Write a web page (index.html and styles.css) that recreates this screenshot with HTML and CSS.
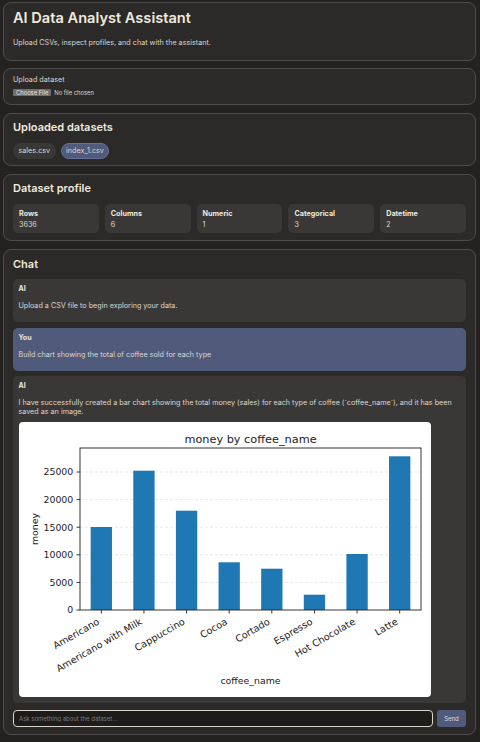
FILE: index.html
```html
<!DOCTYPE html>
<html lang="en">
<head>
  <meta charset="UTF-8">
  <meta name="viewport" content="width=device-width, initial-scale=1.0">
  <title>AI Data Analyst Assistant</title>
  <link rel="stylesheet" href="styles.css">
</head>
<body>
  <section class="panel header-panel">
    <h1>AI Data Analyst Assistant</h1>
    <p class="subtitle">Upload CSVs, inspect profiles, and chat with the assistant.</p>
  </section>

  <section class="panel upload-panel">
    <div class="field-label">Upload dataset</div>
    <label class="file-picker">
      <input type="file" id="fileInput" accept=".csv" hidden>
      <span class="file-button">Choose File</span>
      <span class="file-name">No file chosen</span>
    </label>
  </section>

  <section class="panel datasets-panel">
    <h2>Uploaded datasets</h2>
    <div class="chips">
      <button class="chip">sales.csv</button>
      <button class="chip active">index_1.csv</button>
    </div>
  </section>

  <section class="panel profile-panel">
    <h2>Dataset profile</h2>
    <div class="stats">
      <div class="stat"><div class="stat-label">Rows</div><div class="stat-value">3636</div></div>
      <div class="stat"><div class="stat-label">Columns</div><div class="stat-value">6</div></div>
      <div class="stat"><div class="stat-label">Numeric</div><div class="stat-value">1</div></div>
      <div class="stat"><div class="stat-label">Categorical</div><div class="stat-value">3</div></div>
      <div class="stat"><div class="stat-label">Datetime</div><div class="stat-value">2</div></div>
    </div>
  </section>

  <section class="panel chat-panel">
    <h2>Chat</h2>
    <div class="messages">
      <div class="message ai">
        <div class="message-role">AI</div>
        <p>Upload a CSV file to begin exploring your data.</p>
      </div>
      <div class="message user">
        <div class="message-role">You</div>
        <p>Build chart showing the total of coffee sold for each type</p>
      </div>
      <div class="message ai">
        <div class="message-role">AI</div>
        <p>I have successfully created a bar chart showing the total money (sales) for each type of coffee (`coffee_name`), and it has been saved as an image.</p>
        <div class="chart-image">
          <svg width="412" height="275" viewBox="0 0 412 275" font-family="DejaVu Sans, sans-serif">
            <!-- gridlines -->
            <g stroke="#b0b0b0" stroke-opacity="0.35" stroke-width="0.8" stroke-dasharray="3 2">
              <line x1="61" y1="160.4" x2="402" y2="160.4"/>
              <line x1="61" y1="132.8" x2="402" y2="132.8"/>
              <line x1="61" y1="105.2" x2="402" y2="105.2"/>
              <line x1="61" y1="77.6" x2="402" y2="77.6"/>
              <line x1="61" y1="50" x2="402" y2="50"/>
            </g>
            <!-- bars -->
            <g fill="#1f77b4">
              <rect x="71.66" y="105" width="21.3" height="83"/>
              <rect x="114.29" y="48.7" width="21.3" height="139.3"/>
              <rect x="156.91" y="88.7" width="21.3" height="99.3"/>
              <rect x="199.54" y="140.3" width="21.3" height="47.7"/>
              <rect x="242.16" y="146.7" width="21.3" height="41.3"/>
              <rect x="284.79" y="172.7" width="21.3" height="15.3"/>
              <rect x="327.41" y="132" width="21.3" height="56"/>
              <rect x="370.04" y="34.3" width="21.3" height="153.7"/>
            </g>
            <!-- axes frame -->
            <rect x="61" y="26" width="341" height="162" fill="none" stroke="#222" stroke-width="0.9"/>
            <!-- ticks -->
            <g stroke="#222" stroke-width="0.9">
              <line x1="57.5" y1="188" x2="61" y2="188"/>
              <line x1="57.5" y1="160.4" x2="61" y2="160.4"/>
              <line x1="57.5" y1="132.8" x2="61" y2="132.8"/>
              <line x1="57.5" y1="105.2" x2="61" y2="105.2"/>
              <line x1="57.5" y1="77.6" x2="61" y2="77.6"/>
              <line x1="57.5" y1="50" x2="61" y2="50"/>
              <line x1="82.31" y1="188" x2="82.31" y2="191.5"/>
              <line x1="124.94" y1="188" x2="124.94" y2="191.5"/>
              <line x1="167.56" y1="188" x2="167.56" y2="191.5"/>
              <line x1="210.19" y1="188" x2="210.19" y2="191.5"/>
              <line x1="252.81" y1="188" x2="252.81" y2="191.5"/>
              <line x1="295.44" y1="188" x2="295.44" y2="191.5"/>
              <line x1="338.06" y1="188" x2="338.06" y2="191.5"/>
              <line x1="380.69" y1="188" x2="380.69" y2="191.5"/>
            </g>
            <g font-size="9.4" fill="#222" text-anchor="end">
              <text x="54.3" y="191.4">0</text>
              <text x="54.3" y="163.8">5000</text>
              <text x="54.3" y="136.2">10000</text>
              <text x="54.3" y="108.6">15000</text>
              <text x="54.3" y="81">20000</text>
              <text x="54.3" y="53.4">25000</text>
            </g>
            <g font-size="9.6" fill="#222" text-anchor="end">
              <text x="81.2" y="201.6" transform="rotate(-30 81.2 201.6)">Americano</text>
              <text x="123.8" y="201.6" transform="rotate(-30 123.8 201.6)">Americano with Milk</text>
              <text x="166.5" y="201.6" transform="rotate(-30 166.5 201.6)">Cappuccino</text>
              <text x="209.1" y="201.6" transform="rotate(-30 209.1 201.6)">Cocoa</text>
              <text x="251.7" y="201.6" transform="rotate(-30 251.7 201.6)">Cortado</text>
              <text x="294.3" y="201.6" transform="rotate(-30 294.3 201.6)">Espresso</text>
              <text x="337" y="201.6" transform="rotate(-30 337 201.6)">Hot Chocolate</text>
              <text x="379.6" y="201.6" transform="rotate(-30 379.6 201.6)">Latte</text>
            </g>
            <text x="231.5" y="21" font-size="11.3" fill="#222" text-anchor="middle">money by coffee_name</text>
            <text x="231.5" y="262" font-size="9.4" fill="#222" text-anchor="middle">coffee_name</text>
            <text x="19" y="107" font-size="9.4" fill="#222" text-anchor="middle" transform="rotate(-90 19 107)">money</text>
          </svg>
        </div>
      </div>
    </div>
    <form class="chat-input" onsubmit="return false;">
      <input type="text" placeholder="Ask something about the dataset...">
      <button type="submit">Send</button>
    </form>
  </section>
</body>
</html>
```

FILE: styles.css
```css
* {
  box-sizing: border-box;
}
body {
  margin: 0;
  padding: 2px 4px 0 3px;
  background-color: #232221;
  color: #dcd8d0;
  font-family: Inter, "Noto Sans", sans-serif;
  font-size: 7.2px;
  line-height: 9px;
}
.panel {
  background-color: #2b2a28;
  border: 1px solid #4d4c4a;
  border-radius: 8px;
  padding: 6px 9px;
  margin-bottom: 8px;
}
h1 {
  margin: 0;
  font-size: 14.6px;
  line-height: 20px;
  font-weight: 600;
  color: #efe9dc;
}
h2 {
  margin: 0;
  font-size: 11px;
  line-height: 14px;
  font-weight: 600;
  color: #efe9dc;
}

/* header */
.header-panel {
  padding: 5px 9px 13.5px;
  margin-bottom: 7px;
}
.subtitle {
  margin: 9.5px 0 0;
}

/* upload */
.upload-panel {
  padding: 7.3px 9px 7.7px;
}
.field-label {
  line-height: 8px;
}
.file-picker {
  display: flex;
  align-items: center;
  gap: 3px;
  margin-top: 5px;
  height: 7px;
  font-size: 5.8px;
  cursor: pointer;
}
.file-button {
  background-color: #6f6e6c;
  color: #e6e3de;
  padding: 0 3px;
  height: 7px;
  line-height: 7px;
  border-radius: 1px;
}
.file-name {
  color: #dcd8d0;
}

/* datasets */
.datasets-panel {
  padding: 5.7px 9px 6.3px;
}
.chips {
  display: flex;
  gap: 5px;
  margin-top: 9.6px;
}
.chip {
  height: 15.4px;
  padding: 0 4.5px;
  border-radius: 999px;
  border: 1px solid transparent;
  background-color: #393836;
  color: #dcd8d0;
  font-family: inherit;
  font-size: 7.2px;
  cursor: pointer;
}
.chip.active {
  background-color: #505a7a;
  border-color: #66709a;
}

/* profile */
.profile-panel {
  padding: 6.3px 9px 6.7px;
}
.stats {
  display: grid;
  grid-template-columns: repeat(5, 1fr);
  gap: 6px;
  margin-top: 9px;
}
.stat {
  background-color: #393836;
  border-radius: 5px;
  padding: 5px 6px 4.5px;
  height: 29px;
}
.stat-label {
  font-weight: 700;
  font-size: 7.2px;
  color: #ece8df;
}
.stat-value {
  margin-top: 1.5px;
}

/* chat */
.chat-panel {
  padding: 7px 9px 7.3px;
}
.messages {
  display: flex;
  flex-direction: column;
  gap: 5.5px;
  margin-top: 8.3px;
}
.message {
  background-color: #393836;
  border-radius: 5px;
  padding: 6px 5.5px;
}
.message.user {
  background-color: #505a7a;
}
.message-role {
  font-weight: 700;
  font-size: 7px;
  line-height: 8px;
  margin-bottom: 8px;
  color: #ece8df;
}
.message p {
  margin: 0 0 6px;
}
.chart-image {
  width: 412px;
  height: 275px;
  background-color: #fff;
  border-radius: 4px;
  overflow: hidden;
}
.chart-image svg {
  display: block;
}
.chat-input {
  display: flex;
  gap: 4px;
  margin-top: 6.7px;
  height: 16.7px;
}
.chat-input input {
  flex: 1;
  background-color: #1d1c1b;
  border: 1.5px solid #d9d5cc;
  border-radius: 4px;
  color: #dcd8d0;
  font-family: inherit;
  font-size: 6px;
  padding: 0 5px;
  outline: none;
}
.chat-input input::placeholder {
  color: #7d7a75;
}
.chat-input button {
  width: 29px;
  background-color: #505a7a;
  color: #dcd8e6;
  border: none;
  border-radius: 3px;
  font-family: inherit;
  font-size: 6px;
  cursor: pointer;
}
```
